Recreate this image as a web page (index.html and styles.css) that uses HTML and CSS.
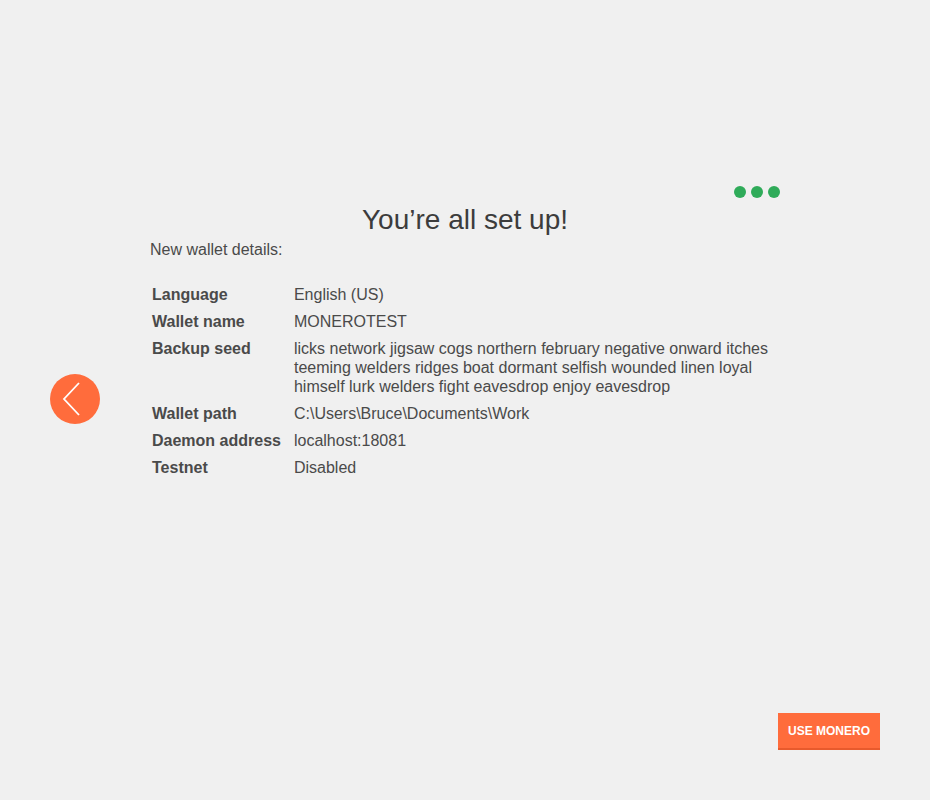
FILE: index.html
```html
<!DOCTYPE html>
<html lang="en">
<head>
  <meta charset="UTF-8">
  <title>Monero Wallet Wizard</title>
  <link rel="stylesheet" href="styles.css">
</head>
<body>
  <div class="page">
    <div class="nav-left">
      <button class="back-button" aria-label="Back">
        <svg width="50" height="50" viewBox="0 0 50 50">
          <polyline points="29,9 14,25 29,41" fill="none" stroke="#fff" stroke-width="1.8"/>
        </svg>
      </button>
    </div>

    <div class="main-content">
      <div class="progress">
        <span class="dot"></span>
        <span class="dot"></span>
        <span class="dot"></span>
      </div>

      <h2>You’re all set up!</h2>
      <p class="subtitle">New wallet details:</p>

      <table class="details">
        <tr>
          <th>Language</th>
          <td>English (US)</td>
        </tr>
        <tr>
          <th>Wallet name</th>
          <td>MONEROTEST</td>
        </tr>
        <tr>
          <th>Backup seed</th>
          <td>licks network jigsaw cogs northern february negative onward itches teeming welders ridges boat dormant selfish wounded linen loyal himself lurk welders fight eavesdrop enjoy eavesdrop</td>
        </tr>
        <tr>
          <th>Wallet path</th>
          <td>C:\Users\Bruce\Documents\Work</td>
        </tr>
        <tr>
          <th>Daemon address</th>
          <td>localhost:18081</td>
        </tr>
        <tr>
          <th>Testnet</th>
          <td>Disabled</td>
        </tr>
      </table>
    </div>

    <div class="footer">
      <button class="use-button">USE MONERO</button>
    </div>
  </div>
</body>
</html>
```

FILE: styles.css
```css
html, body {
  margin: 0;
  padding: 0;
}

body {
  font-family: "Liberation Sans", Arial, sans-serif;
  background-color: #f0f0f0;
  color: #3f3f3f;
}

.page {
  height: 800px;
  display: grid;
  grid-template-columns: 150px 630px 1fr;
  grid-template-rows: 1fr auto;
}

.nav-left {
  grid-row: 1 / -1;
  display: flex;
  align-items: center;
  justify-content: center;
  padding-bottom: 2px;
}

.back-button {
  width: 50px;
  height: 50px;
  padding: 0;
  border: none;
  border-radius: 50%;
  background-color: #ff6c3c;
  cursor: pointer;
  display: flex;
}

.main-content {
  padding-top: 186px;
}

.progress {
  display: flex;
  justify-content: flex-end;
  gap: 5px;
  height: 12px;
}

.dot {
  width: 12px;
  height: 12px;
  border-radius: 50%;
  background-color: #2fab59;
}

h2 {
  margin: 6px 0 0 0;
  text-align: center;
  font-weight: normal;
  font-size: 28px;
  line-height: 32px;
  color: #3c3c3c;
}

.subtitle {
  margin: 4px 0 0 0;
  font-size: 16px;
  line-height: 20px;
  color: #4a4a4a;
}

.details {
  margin-top: 21px;
  border-collapse: collapse;
  font-size: 16px;
  line-height: 19px;
}

.details th {
  text-align: left;
  vertical-align: top;
  font-weight: bold;
  color: #4a4a4a;
  padding: 4px 13px 4px 2px;
  white-space: nowrap;
}

.details td {
  vertical-align: top;
  color: #4a4a4a;
  padding: 4px 0;
}

.footer {
  grid-column: 2 / -1;
  display: flex;
  justify-content: flex-end;
  padding: 0 50px 50px 0;
}

.use-button {
  width: 102px;
  height: 37px;
  border: none;
  border-bottom: 2px solid #e85a2c;
  background-color: #ff6c3c;
  color: #fff;
  font-family: "Liberation Sans", Arial, sans-serif;
  font-weight: bold;
  font-size: 12px;
  cursor: pointer;
}
```
